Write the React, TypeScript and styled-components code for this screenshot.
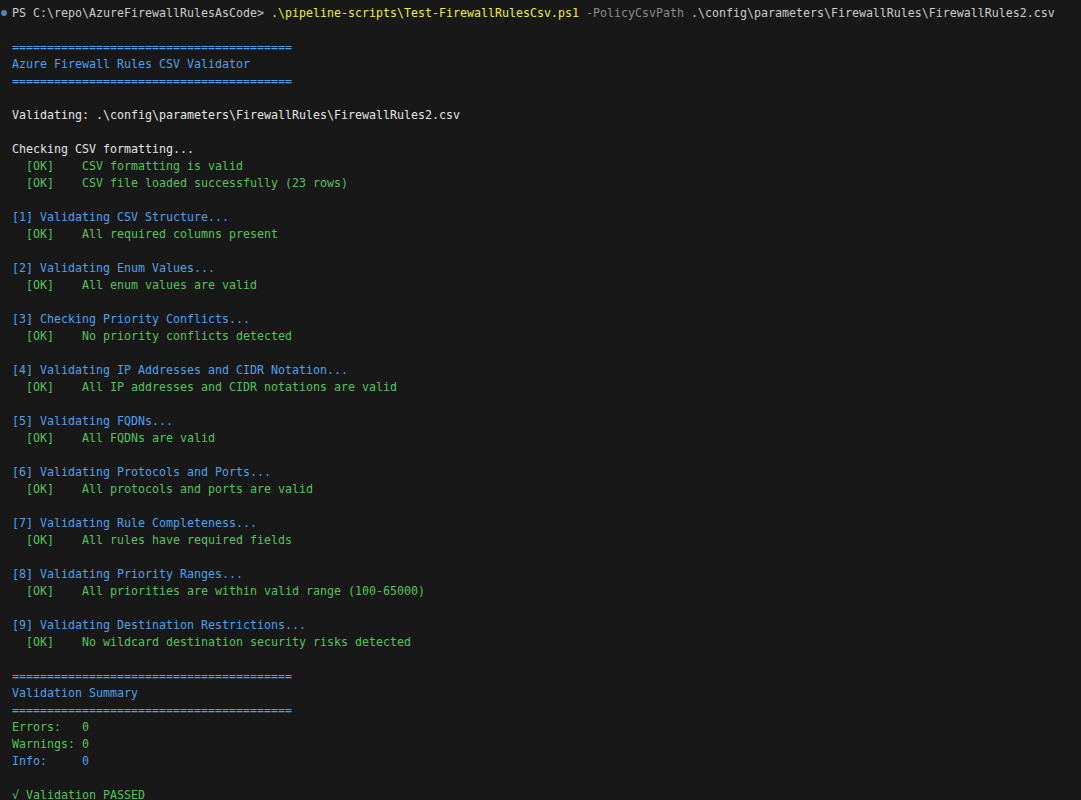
import React from "react";
import styled, { createGlobalStyle } from "styled-components";

const GlobalStyle = createGlobalStyle`
  html, body {
    margin: 0;
    padding: 0;
    background: #181818;
  }
`;

const colors = {
  text: "#cccccc",
  white: "#e5e5e5",
  blue: "#4ea1ec",
  green: "#55c35c",
  yellow: "#ecec4a",
  gray: "#8c8c8c",
};

type Tone = keyof typeof colors;

const Terminal = styled.div`
  box-sizing: border-box;
  width: 1081px;
  height: 800px;
  overflow: hidden;
  padding: 5px 0 0 12px;
  background: #181818;
  font-family: "DejaVu Sans Mono", "Liberation Mono", monospace;
  font-size: 11.63px;
  color: ${colors.text};
`;

const Line = styled.div<{ $tone?: Tone }>`
  position: relative;
  height: 17px;
  line-height: 17px;
  white-space: pre;
  color: ${(p) => colors[p.$tone || "text"]};
`;

const Seg = styled.span<{ $tone: Tone }>`
  color: ${(p) => colors[p.$tone]};
`;

const CommandDot = styled.span`
  position: absolute;
  left: -11px;
  top: 5px;
  width: 6px;
  height: 6px;
  border-radius: 50%;
  background: #4a86b8;
`;

const rule = "========================================";

const checks: [string, string][] = [
  ["[1] Validating CSV Structure...", "All required columns present"],
  ["[2] Validating Enum Values...", "All enum values are valid"],
  ["[3] Checking Priority Conflicts...", "No priority conflicts detected"],
  ["[4] Validating IP Addresses and CIDR Notation...", "All IP addresses and CIDR notations are valid"],
  ["[5] Validating FQDNs...", "All FQDNs are valid"],
  ["[6] Validating Protocols and Ports...", "All protocols and ports are valid"],
  ["[7] Validating Rule Completeness...", "All rules have required fields"],
  ["[8] Validating Priority Ranges...", "All priorities are within valid range (100-65000)"],
  ["[9] Validating Destination Restrictions...", "No wildcard destination security risks detected"],
];

const Ok = ({ text }: { text: string }) => <Line $tone="green">{"  [OK]    " + text}</Line>;

export default function App() {
  return (
    <>
      <GlobalStyle />
      <Terminal>
        <Line>
          <CommandDot />
          {"PS C:\\repo\\AzureFirewallRulesAsCode> "}
          <Seg $tone="yellow">.\pipeline-scripts\Test-FirewallRulesCsv.ps1</Seg>
          <Seg $tone="gray"> -PolicyCsvPath</Seg>
          {" .\\config\\parameters\\FirewallRules\\FirewallRules2.csv"}
        </Line>
        <Line />
        <Line $tone="blue">{rule}</Line>
        <Line $tone="blue">Azure Firewall Rules CSV Validator</Line>
        <Line $tone="blue">{rule}</Line>
        <Line />
        <Line $tone="white">{"Validating: .\\config\\parameters\\FirewallRules\\FirewallRules2.csv"}</Line>
        <Line />
        <Line $tone="white">Checking CSV formatting...</Line>
        <Ok text="CSV formatting is valid" />
        <Ok text="CSV file loaded successfully (23 rows)" />
        {checks.map(([title, result]) => (
          <React.Fragment key={title}>
            <Line />
            <Line $tone="blue">{title}</Line>
            <Ok text={result} />
          </React.Fragment>
        ))}
        <Line />
        <Line $tone="blue">{rule}</Line>
        <Line $tone="blue">Validation Summary</Line>
        <Line $tone="blue">{rule}</Line>
        <Line $tone="green">{"Errors:   0"}</Line>
        <Line $tone="green">{"Warnings: 0"}</Line>
        <Line $tone="blue">{"Info:     0"}</Line>
        <Line />
        <Line $tone="green">{"√ Validation PASSED"}</Line>
      </Terminal>
    </>
  );
}
